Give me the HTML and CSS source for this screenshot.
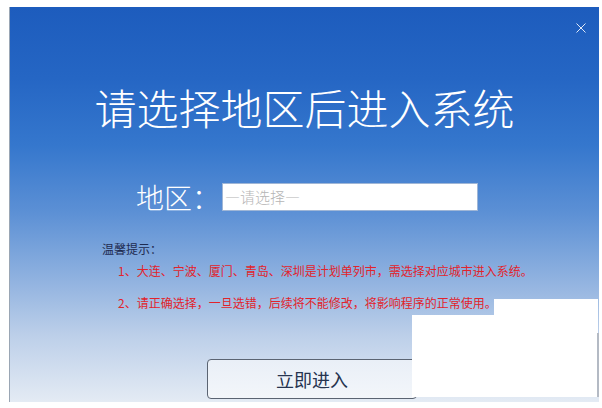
FILE: index.html
```html
<!DOCTYPE html>
<html lang="zh-CN">
<head>
  <meta charset="UTF-8">
  <title>请选择地区后进入系统</title>
  <link rel="stylesheet" href="styles.css">
</head>
<body>
  <div class="window">
    <div class="title-bar">
      <svg class="close" width="10" height="10" viewBox="0 0 10 10">
        <path d="M0.5 0.5 L9.5 9.5 M9.5 0.5 L0.5 9.5" stroke="#dfe9f7" stroke-width="1" fill="none"/>
      </svg>
    </div>

    <h1 class="headline">请选择地区后进入系统</h1>

    <div class="region-row">
      <span class="region-label">地区：</span>
      <div class="region-select">—请选择—</div>
    </div>

    <div class="tips">
      <p class="tips-title">温馨提示：</p>
      <ol class="tips-list">
        <li>1、大连、宁波、厦门、青岛、深圳是计划单列市，需选择对应城市进入系统。</li>
        <li>2、请正确选择，一旦选错，后续将不能修改，将影响程序的正常使用。</li>
      </ol>
    </div>

    <button class="enter-btn">立即进入</button>
  </div>

  <!-- blanked-out areas of the original screenshot -->
  <div class="mask mask-a"></div>
  <div class="mask mask-b"></div>
  <div class="mask-line"></div>
</body>
</html>
```

FILE: styles.css
```css
body {
  margin: 0;
  background: #fff;
  font-family: "Noto Sans CJK SC", "Liberation Sans", sans-serif;
}

.window {
  margin: 7px 0 0 9px;
  width: 589px;
  height: 395px;
  border-left: 1px solid #9aa6b4;
  background: linear-gradient(to bottom,
    #1d5cbd 0%,
    #2566c4 18%,
    #3577cd 35%,
    #5c90d5 52%,
    #8db0df 68%,
    #bccfe9 83%,
    #e4ebf4 100%);
}

.title-bar {
  display: flex;
  justify-content: flex-end;
  padding: 16px 13px 0 0;
}

.close {
  display: block;
}

.headline {
  margin: 53px 0 0;
  text-align: center;
  font-size: 42px;
  line-height: 42px;
  font-weight: 300;
  color: #fff;
}

.region-row {
  display: flex;
  align-items: center;
  margin-top: 55px;
  padding-left: 126px;
  height: 28px;
}

.region-label {
  font-size: 28px;
  line-height: 28px;
  font-weight: 300;
  color: #fff;
}

.region-select {
  margin-left: 2px;
  width: 252px;
  height: 26px;
  border: 1px solid #9fb6d6;
  background: #fff;
  padding-left: 2px;
  font-size: 15px;
  line-height: 26px;
  color: #b5b5b5;
  font-weight: 300;
}

.tips {
  margin-top: 28px;
  padding-left: 92px;
  font-size: 12px;
  line-height: 20px;
}

.tips-title {
  margin: 0;
  color: #1e2b50;
}

.tips-list {
  list-style: none;
  margin: 2px 0 0;
  padding-left: 16px;
  display: flex;
  flex-direction: column;
  gap: 12px;
  color: #e2232b;
}

.enter-btn {
  display: block;
  margin: 46px 0 0 197px;
  width: 210px;
  height: 40px;
  border: 1px solid #5b6472;
  border-radius: 4px;
  background: linear-gradient(to bottom, #e9eff7, #f3f6fa);
  font-family: inherit;
  font-size: 18px;
  color: #26344f;
}

.mask {
  position: absolute;
  background: #fff;
}

.mask-a {
  left: 494px;
  top: 299px;
  width: 104px;
  height: 98px;
}

.mask-b {
  left: 412px;
  top: 315px;
  width: 186px;
  height: 82px;
}

.mask-line {
  position: absolute;
  left: 597px;
  top: 333px;
  width: 2px;
  height: 64px;
  background: #b4bac4;
}
```
